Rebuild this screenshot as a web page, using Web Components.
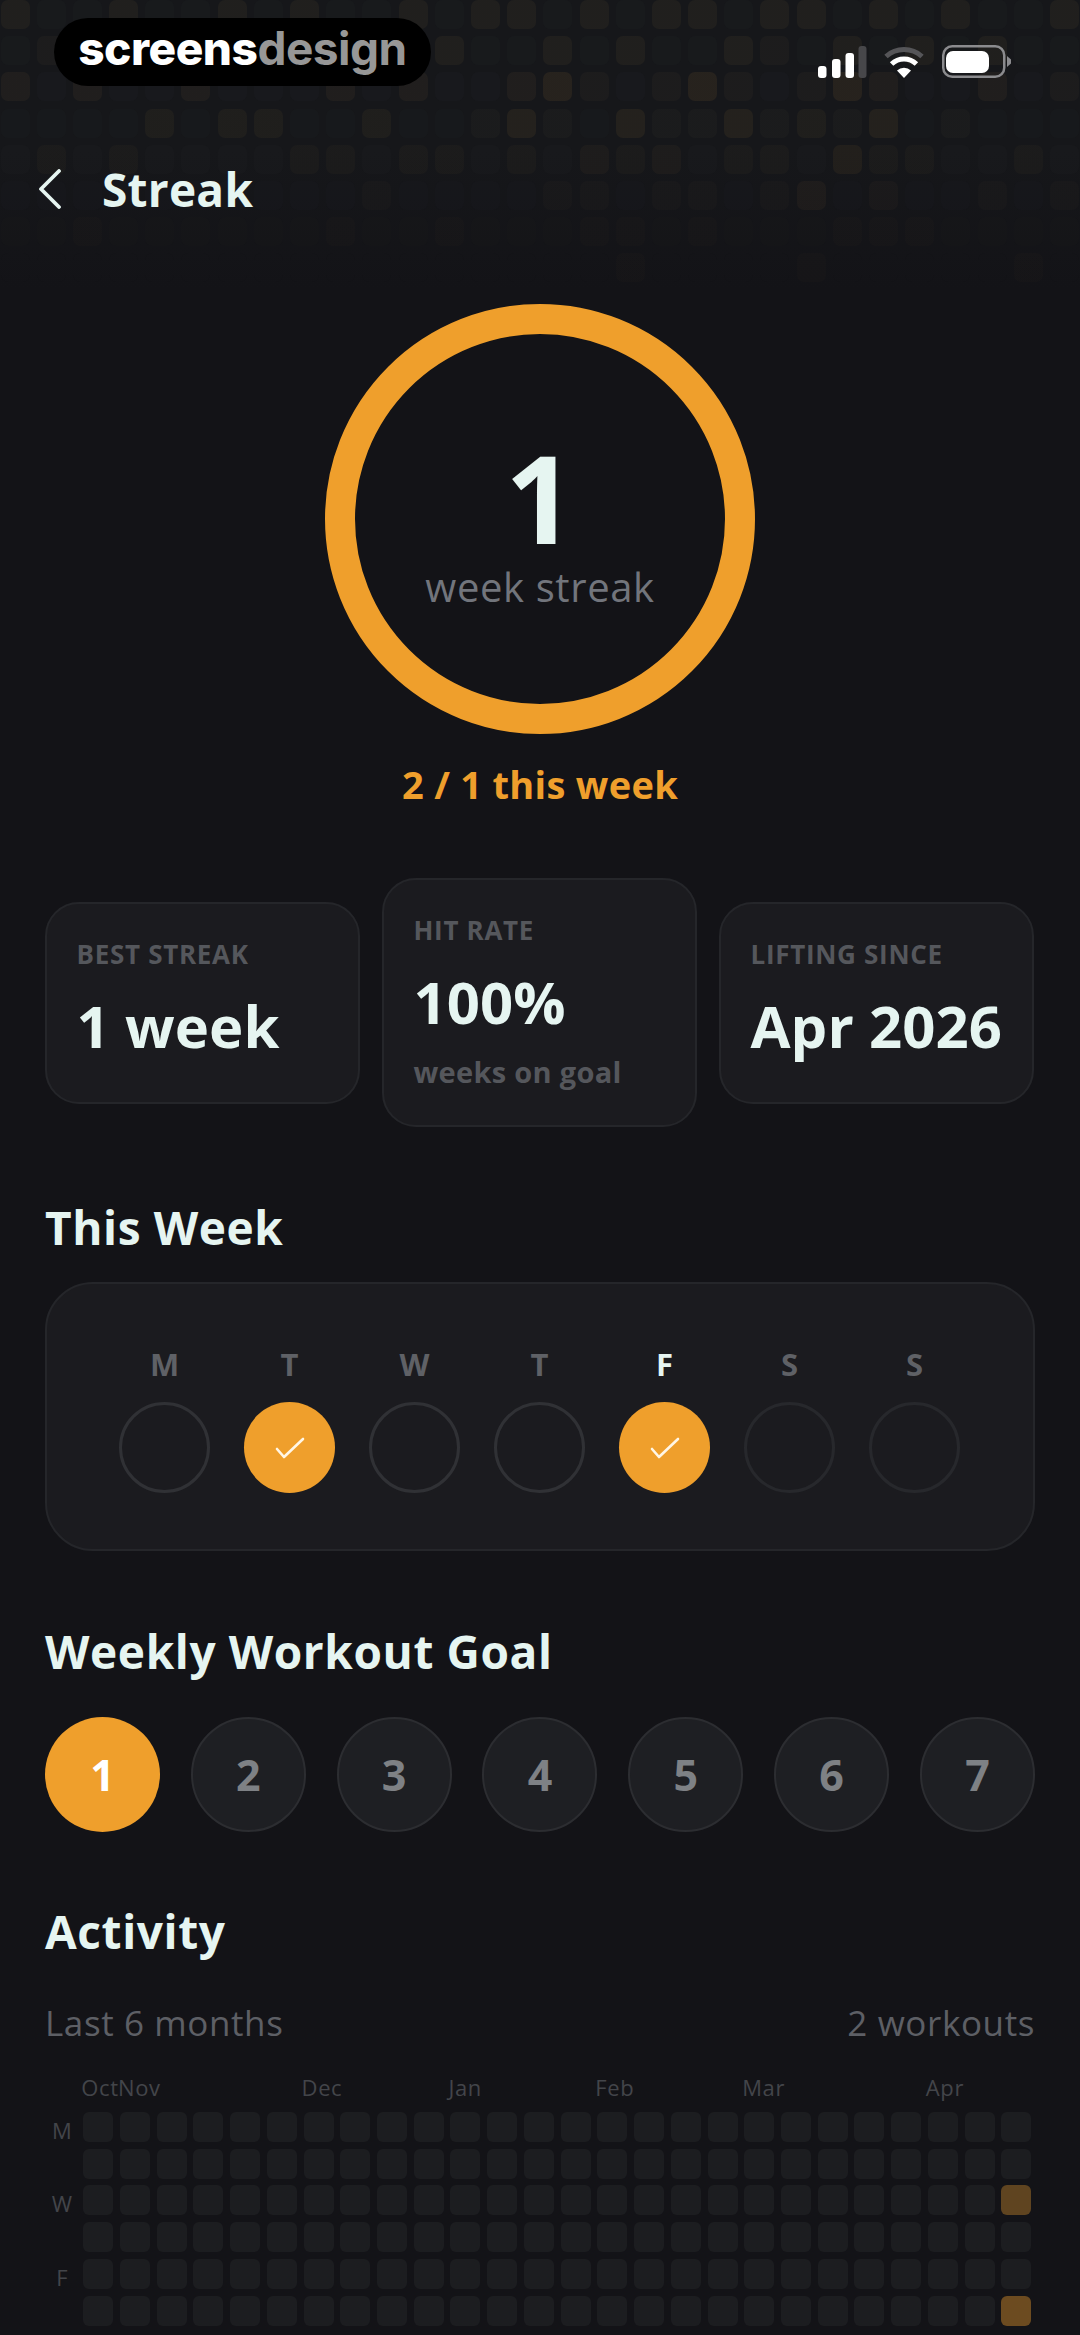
<!DOCTYPE html>
<html lang="en"><head><meta charset="utf-8"><title>Streak</title>
<style>
html,body{margin:0;padding:0;background:#131317}
body{width:1080px;height:2335px;overflow:hidden;font-family:"Open Sans","Noto Sans",sans-serif;color:#e6f5f1}
</style></head>
<body>
<streak-app>
  <dot-backdrop slot="backdrop"></dot-backdrop>
  <status-bar></status-bar>
  <nav-header>Streak</nav-header>
  <streak-ring value="1" label="week streak"></streak-ring>
  <div slot="note">2 / 1 this week</div>
  <stat-row slot="stats">
    <stat-card label="BEST STREAK" value="1 week"></stat-card>
    <stat-card label="HIT RATE" value="100%" sub="weeks on goal"></stat-card>
    <stat-card label="LIFTING SINCE" value="Apr 2026"></stat-card>
  </stat-row>
  <section-title slot="t1">This Week</section-title>
  <week-card slot="week"></week-card>
  <section-title slot="t2">Weekly Workout Goal</section-title>
  <goal-picker slot="goal"></goal-picker>
  <section-title slot="t3">Activity</section-title>
  <activity-map slot="activity"></activity-map>
</streak-app>
<script>
function def(name, css, html, init){
  customElements.define(name, class extends HTMLElement{
    constructor(){super();const r=this.attachShadow({mode:'open'});
      r.innerHTML='<style>'+css+'</style>'+(typeof html==='function'?html(this):html);}
    connectedCallback(){
      if(typeof html==='function'){const st=this.shadowRoot.querySelector('style').outerHTML;this.shadowRoot.innerHTML=st+html(this);}
      if(init)init(this);
    }
  });
}
def('streak-app',`
  :host{display:block;position:relative;width:1080px;height:2335px;overflow:hidden;background:#131317}
  .c{position:relative;display:flex;flex-direction:column}
  .note{align-self:center;margin-top:25px;font-size:38px;line-height:50px;font-weight:700;color:#ef9f2c;letter-spacing:.3px}
  .stats{margin:69px 46px 0 45px;display:block}
  .t1{margin-top:70px;display:block}
  .week{margin-top:25px;display:block}
  .t2{margin-top:70px;display:block}
  .goal{margin-top:36px;display:block}
  .t3{margin-top:69px;display:block}
  .act{margin-top:39px;display:block}
`,`<slot name="backdrop"></slot>
  <div class="c"><slot></slot>
  <div class="note"><slot name="note"></slot></div>
  <div class="stats"><slot name="stats"></slot></div>
  <div class="t1"><slot name="t1"></slot></div>
  <div class="week"><slot name="week"></slot></div>
  <div class="t2"><slot name="t2"></slot></div>
  <div class="goal"><slot name="goal"></slot></div>
  <div class="t3"><slot name="t3"></slot></div>
  <div class="act"><slot name="activity"></slot></div>
  </div>`);

const amber={
 0:{0:2,3:2,6:2,8:2,11:2,13:2,14:2,16:2,18:2,19:2,21:2,22:2,24:2,26:2,29:2},
 1:{1:1,12:2,15:2,17:2,20:2,21:1,23:2,25:2,27:2},
 2:{0:2,2:2,5:2,9:2,11:2,14:2,15:3,16:1,18:1,19:3,20:1,22:1,23:3,24:2,27:2,29:1},
 3:{4:2,6:2,7:2,10:2,13:1,14:3,15:1,17:3,18:1,19:1,20:3,21:1,22:2,23:1,24:3,26:1},
 4:{1:1,3:1,8:1,9:1,11:1,12:1,14:1,16:2,17:1,18:2,20:1,21:1,23:3,24:1,25:1,28:1},
 5:{10:1,15:1,16:1,18:1,19:1,21:1,22:3,24:2,27:1,29:1},
 6:{2:1,9:1,12:1,16:1,17:1,19:1,23:1,24:1,25:1},
 7:{17:1,22:1,28:1}
};
const rowFade=[1,1,.95,.85,.7,.5,.3,.12];
def('dot-backdrop',`
  :host{position:absolute;left:0;top:0;width:1080px;height:300px;display:block;overflow:hidden;
    background:linear-gradient(#16171a 0,#16171a 150px,#131317 290px)}
  .g{display:grid;grid-template-columns:repeat(30,29px);grid-auto-rows:29px;gap:7.2px;margin-left:.5px}
  i{display:block;border-radius:7px}
`,()=>{let h='<div class="g">';
  for(let r=0;r<8;r++)for(let c=0;c<30;c++){
    const l=(amber[r]||{})[c]||0, f=rowFade[r];
    const base=`rgba(40,41,46,${(.16*f).toFixed(3)})`;
    const a=[0,.02,.04,.07][l]*Math.max(f,.55);
    const bg=l?`linear-gradient(rgba(240,160,44,${a.toFixed(3)}),rgba(240,160,44,${a.toFixed(3)})),${base}`:base;
    h+=`<i style="background:${bg}"></i>`;
  }
  return h+'</div>';});

def('status-bar',`
  :host{display:flex;justify-content:space-between;align-items:flex-start;height:86px;box-sizing:border-box;padding:18px 69px 0 54px}
  .logo{width:377px;height:68px;border-radius:34px;background:#000;display:flex;align-items:center;justify-content:center;
    font-family:Inter,"Liberation Sans",sans-serif;font-size:46px;line-height:60px;font-weight:800;color:#fff;letter-spacing:-.5px;box-sizing:border-box;padding-bottom:8px}
  .logo span{color:#979797;font-weight:700}
  .ic{display:flex;margin-top:27px;align-items:flex-end}
  svg{display:block}
`,`<div class="logo">screens<span>design</span></div>
  <div class="ic">
   <svg width="49" height="32" viewBox="0 0 49 32"><g fill="#fff"><rect x="0" y="20" width="8.5" height="12" rx="3"/><rect x="14" y="13" width="8.5" height="19" rx="3"/><rect x="27.5" y="7" width="8.5" height="25" rx="3"/></g><rect x="40.5" y="0" width="8" height="32" rx="3" fill="#47474a"/></svg>
   <svg style="margin-left:16px" width="42" height="32" viewBox="0 0 42 32"><path d="M3 10.5A27 27 0 0 1 39 10.5" fill="none" stroke="#555558" stroke-width="5"/><path d="M8.6 18A18 18 0 0 1 33.4 18" fill="none" stroke="#fff" stroke-width="5"/><path d="M14 24.5A10.5 10.5 0 0 1 28 24.5L21 32Z" fill="#fff"/></svg>
   <svg style="margin-left:17px" width="69" height="33" viewBox="0 0 69 33"><rect x="1.25" y="1.25" width="61" height="30.5" rx="9" fill="none" stroke="#8b8b8e" stroke-width="2.5"/><rect x="4" y="6" width="43" height="22" rx="7" fill="#fff"/><path d="M65 11L69 14.5V18.5L65 22Z" fill="#8b8b8e"/></svg>
  </div>`);

def('nav-header',`
  :host{display:flex;align-items:center;height:76px;margin-top:65px;padding-left:38px;box-sizing:border-box}
  svg{display:block}
  .t{margin-left:40px;font-size:46px;line-height:60px;font-weight:700;color:#e6f5f1;letter-spacing:.25px}
`,`<svg width="24" height="40" viewBox="0 0 24 40"><path d="M21 2L3 20L21 38" fill="none" stroke="#e6f5f1" stroke-width="3.8" stroke-linecap="round" stroke-linejoin="round"/></svg><div class="t"><slot></slot></div>`);

def('streak-ring',`
  :host{display:block;width:430px;height:430px;margin:77px auto 0}
  .r{box-sizing:border-box;width:430px;height:430px;border-radius:50%;border:30px solid #ef9f2c;display:flex;flex-direction:column;align-items:center;padding-top:102px}
  .n{font-size:122px;line-height:122px;font-weight:700;color:#e6f5f1}
  .l{font-size:40px;line-height:52px;color:#72757c;letter-spacing:.6px;margin-top:3px}
`,e=>`<div class="r"><div class="n">${e.getAttribute('value')}</div><div class="l">${e.getAttribute('label')}</div></div>`);

def('stat-row',`:host{display:flex;align-items:center;justify-content:space-between;width:989px}`,`<slot></slot>`);
def('stat-card',`
  :host{display:block;box-sizing:border-box;width:315px;padding:32px 20px 37px 29.5px;background:#1b1b1f;border:2px solid #25262a;border-radius:34px}
  :host([sub]){padding-bottom:35px}
  .l{font-size:26px;line-height:36px;font-weight:700;color:#55575c;letter-spacing:.7px;white-space:nowrap}
  .v{font-size:58px;line-height:78px;font-weight:700;color:#e6f5f1;margin-top:15px;white-space:nowrap;letter-spacing:.1px}
  .s{font-size:29px;line-height:36px;font-weight:700;color:#55575c;margin-top:13px;letter-spacing:.3px;white-space:nowrap}
`,e=>`<div class="l">${e.getAttribute('label')}</div><div class="v">${e.getAttribute('value')}</div>${e.getAttribute('sub')?`<div class="s">${e.getAttribute('sub')}</div>`:''}`);

def('section-title',`:host{display:block;padding-left:45px;font-size:46px;line-height:60px;font-weight:700;color:#e6f5f1;letter-spacing:.6px}`,`<slot></slot>`);

def('week-card',`
  :host{display:block;box-sizing:border-box;width:990px;height:269px;margin-left:45px;background:#1b1b1f;border:2px solid #25262a;border-radius:48px;padding:0 73px 0 72px}
  .g{display:flex;justify-content:space-between;margin-top:60px}
  .d{width:91px;display:flex;flex-direction:column;align-items:center}
  .n{font-size:31px;line-height:40px;font-weight:700;color:#5f6166}
  .n.on{color:#e6f5f1}
  .o{box-sizing:border-box;width:91px;height:91px;border-radius:50%;border:3px solid #303135;margin-top:18px;display:flex;align-items:center;justify-content:center}
  .o.dim{border-color:#27282c}
  .o.ok{background:#ef9f2c;border:0}
  svg{display:block}
`,()=>{
 const ds=['M','T','W','T','F','S','S'];const ok=[1,4];
 return '<div class="g">'+ds.map((n,i)=>`<div class="d"><div class="n${i==4?' on':''}">${n}</div><div class="o${ok.includes(i)?' ok':''}${i>4?' dim':''}">${ok.includes(i)?'<svg width="30" height="22" viewBox="0 0 30 22"><path d="M2 12L9 20L28 2" fill="none" stroke="#fff6e6" stroke-width="2.6" stroke-linecap="round" stroke-linejoin="round"/></svg>':''}</div></div>`).join('')+'</div>';
});

def('goal-picker',`
  :host{display:flex;justify-content:space-between;width:990px;margin-left:45px}
  .b{box-sizing:border-box;width:115px;height:115px;border-radius:50%;background:#1e1f23;border:2px solid #2c2d31;display:flex;align-items:center;justify-content:center;font-size:43px;font-weight:700;color:#7e8185}
  .b.on{background:#ef9f2c;border:0;color:#fff}
`,()=>[1,2,3,4,5,6,7].map(n=>`<div class="b${n==1?' on':''}">${n}</div>`).join(''));

def('activity-map',`
  :host{display:block;padding:0 45px}
  .h{display:flex;justify-content:space-between;font-size:35px;line-height:46px;color:#5d5f65;letter-spacing:.6px}
  .hm{display:grid;grid-template-columns:38.3px 1fr;margin-top:10px}
  .days{display:grid;grid-template-rows:repeat(6,30px);row-gap:6.73px;font-size:22px;line-height:36px;color:#43454a}
  .days span{text-align:center;width:34px;height:30px}
  .g{display:grid;grid-template-columns:repeat(26,30px);grid-auto-rows:30px;gap:6.73px}
  .g i{display:block;border-radius:6px;background:#1c1d20}
  .g i.a{background:#5f4420}
  .g i.b{background:#6c4b20}
  .ml{display:grid;grid-template-columns:29.57px repeat(26,30px);column-gap:6.73px;margin-top:26px;font-size:22px;line-height:30px;color:#43454a;letter-spacing:.6px}
  .ml span{white-space:nowrap}
`,()=>{
  let cells='';
  for(let r=0;r<6;r++)for(let c=0;c<26;c++){
    const cls=(c==25&&r==2)?' class="a"':(c==25&&r==5)?' class="b"':'';
    cells+=`<i${cls}></i>`;
  }
  const months=[['Oct',0],['Nov',1],['Dec',6],['Jan',10],['Feb',14],['Mar',18],['Apr',23]];
  return `<div class="h"><span>Last 6 months</span><span>2 workouts</span></div>
  <div class="ml">${months.map(([m,c])=>`<span style="grid-column:${c+2};grid-row:1">${m}</span>`).join('')}</div>
  <div class="hm"><div class="days"><span>M</span><span></span><span>W</span><span></span><span>F</span><span></span></div><div class="g">${cells}</div></div>`;
});
</script>
</body></html>
